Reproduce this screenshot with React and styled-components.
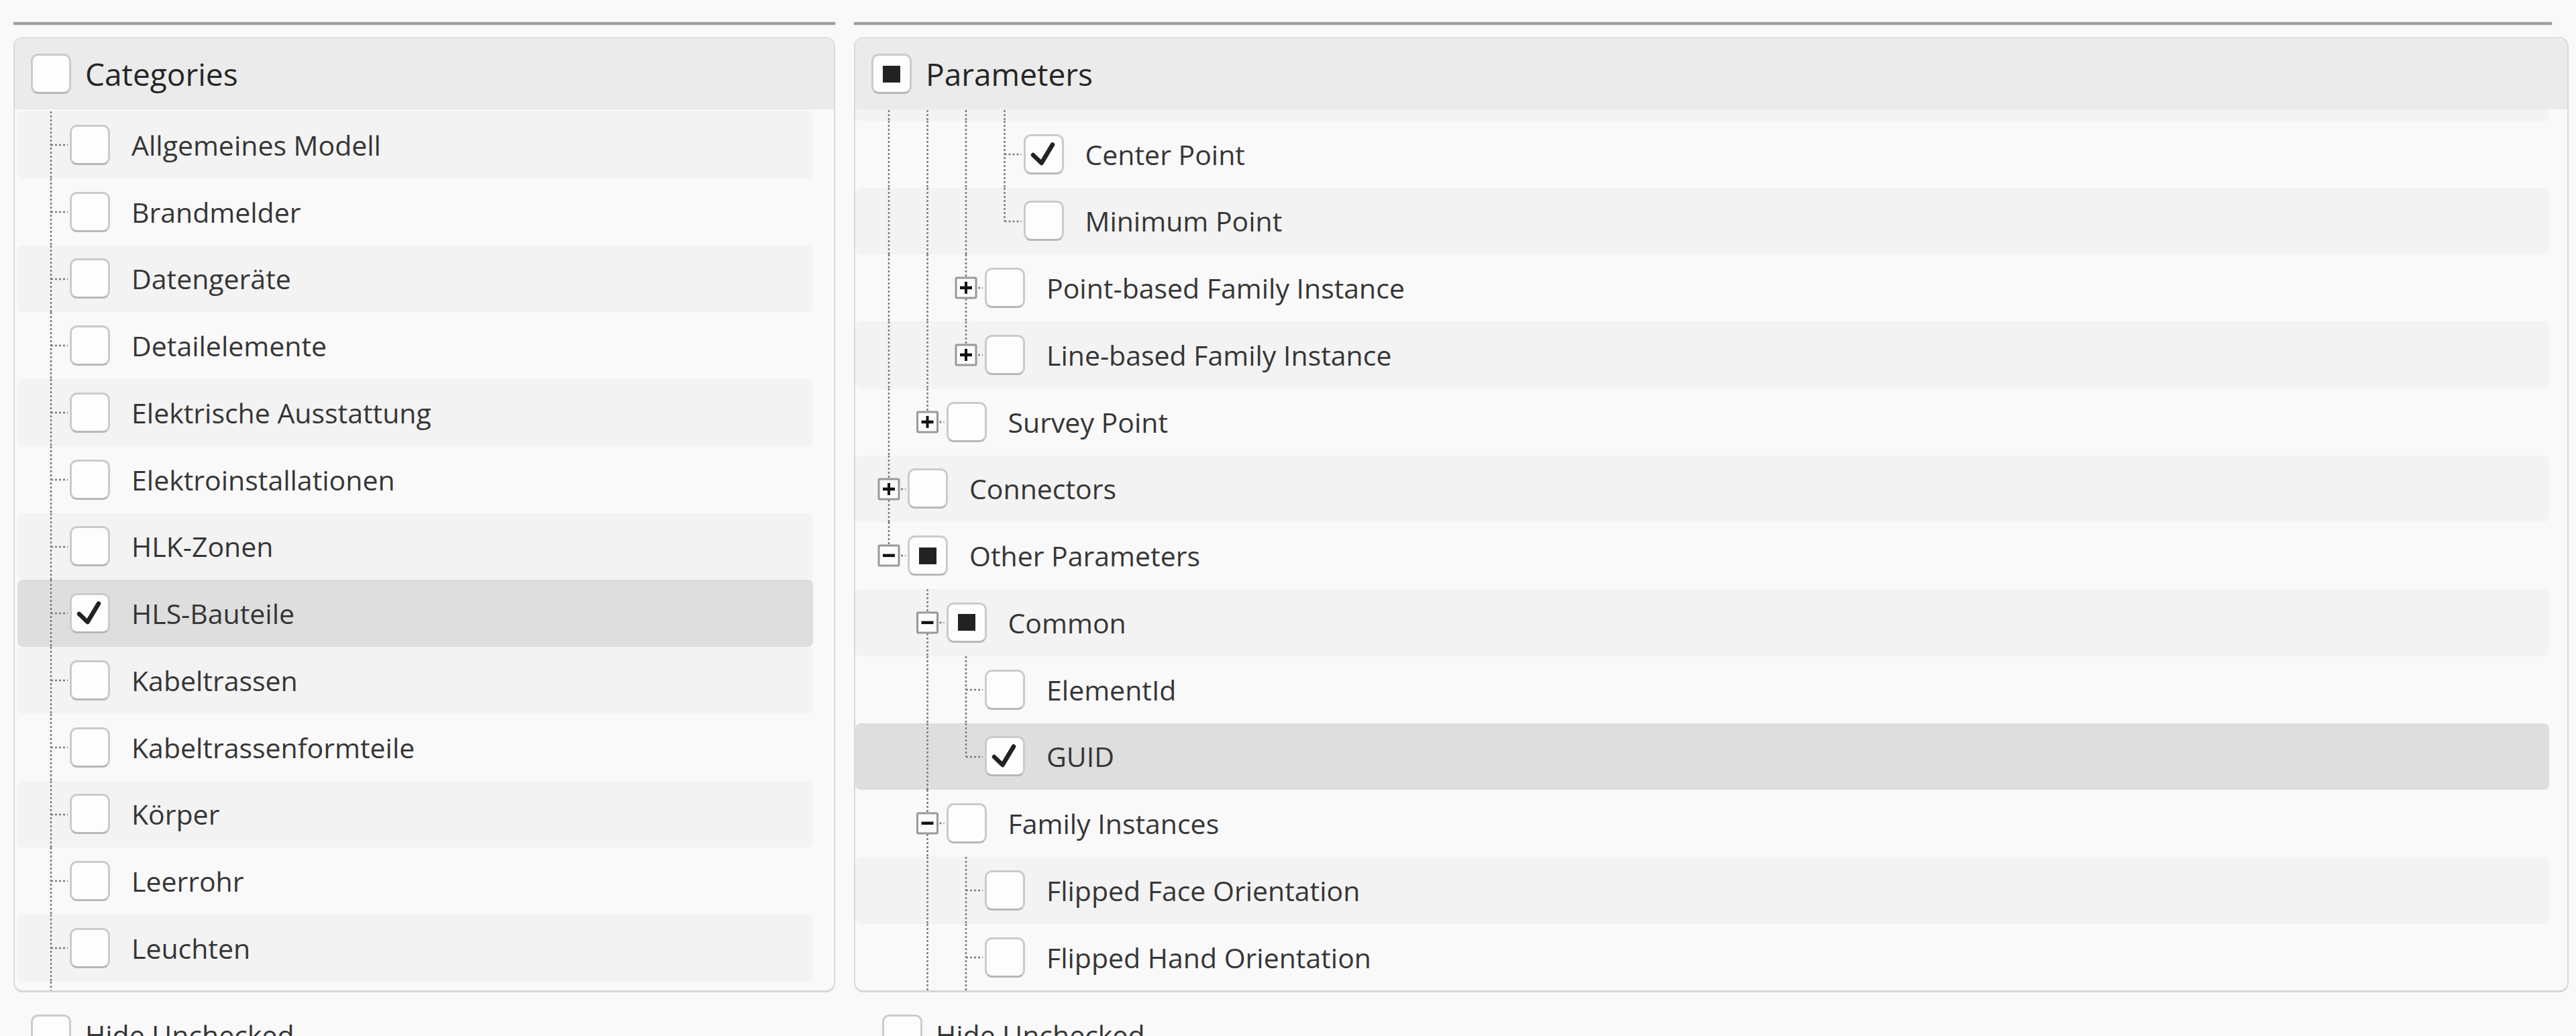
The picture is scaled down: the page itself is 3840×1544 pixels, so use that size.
import React from "react";
import styled, { createGlobalStyle } from "styled-components";

const ROW_H = 99.75;
const INDENT = 57.5;

const GlobalStyle = createGlobalStyle`
  html, body {
    margin: 0;
    padding: 0;
    background: #f9f9f9;
  }
  body {
    font-family: "Open Sans", "Noto Sans", sans-serif;
    color: #333333;
  }
`;

const SPage = styled.div`
  width: 3840px;
  height: 1544px;
  box-sizing: border-box;
  overflow: hidden;
  padding: 33px 11px 0 20px;
  display: grid;
  grid-template-columns: 1225px 1fr;
  column-gap: 28px;
`;

const SColumn = styled.div`
  display: flex;
  flex-direction: column;
  min-width: 0;
`;

const SSplitLine = styled.div`
  height: 4px;
  flex: none;
  background: #9d9d9d;
  box-shadow: 0 0 2px rgba(0, 0, 0, 0.25);
  margin-right: ${(p) => p.$trim || 0}px;
`;

const SPanel = styled.div`
  margin-top: 18px;
  height: 1424px;
  flex: none;
  box-sizing: border-box;
  border: 2px solid #dadada;
  border-top-color: #e0e0e0;
  border-bottom: 3px solid #d6d6d6;
  border-radius: 14px;
  background: #f9f9f9;
  overflow: hidden;
  display: flex;
  flex-direction: column;
`;

const SHeader = styled.div`
  height: 106px;
  flex: none;
  background: #ebebeb;
  display: flex;
  align-items: center;
  padding-left: 24px;
  gap: 21px;
  font-size: 46px;
  color: #262626;
`;

const SBody = styled.div`
  flex: 1;
  overflow: hidden;
  padding: 3px ${(p) => p.$right}px 0 ${(p) => p.$left}px;
`;

const SList = styled.div`
  display: flex;
  flex-direction: column;
  margin-top: ${(p) => p.$offset || 0}px;
`;

const SRow = styled.div`
  height: ${ROW_H}px;
  flex: none;
  display: flex;
  align-items: center;
  border-radius: 8px;
  background: ${(p) =>
    p.$selected ? "#dedede" : p.$alt ? "#f3f3f3" : "transparent"};
  font-size: 41px;
  color: #363636;
  white-space: nowrap;
`;

const SLabel = styled.span`
  margin-left: 32px;
`;

const SBox = styled.span`
  width: 60px;
  height: 60px;
  flex: none;
  box-sizing: border-box;
  border: 3px solid #cbcbcb;
  border-bottom-color: #b8b8b8;
  border-radius: 11px;
  background: #fdfdfd;
  display: flex;
  align-items: center;
  justify-content: center;
`;

const SMixed = styled.span`
  width: 26px;
  height: 25px;
  background: #222222;
`;

const SFooter = styled.div`
  margin-top: 33px;
  display: flex;
  align-items: center;
  gap: ${(p) => p.$gap}px;
  padding-left: ${(p) => p.$left}px;
  font-size: 41px;
  color: #363636;
`;

function CheckBox({ state }) {
  return (
    <SBox>
      {state === "checked" && (
        <svg width="54" height="54" viewBox="3 3 54 54">
          <path
            d="M14 31 L26.5 43 L43 15.5"
            fill="none"
            stroke="#222"
            strokeWidth="6.5"
            strokeLinecap="round"
            strokeLinejoin="round"
          />
        </svg>
      )}
      {state === "mixed" && <SMixed />}
    </SBox>
  );
}

function Guides({ level, guides = [], last, expander }) {
  const w = 78 + INDENT * level;
  const mid = ROW_H / 2;
  const x0 = 50 + INDENT * level;
  const line = { stroke: "#7c7c7c", strokeWidth: 2.5, strokeDasharray: "3 3" };
  return (
    <svg width={w} height={ROW_H} style={{ flex: "none" }}>
      {guides.map((on, k) =>
        on ? (
          <line key={k} x1={50 + INDENT * k} y1="0" x2={50 + INDENT * k} y2={ROW_H} {...line} />
        ) : null
      )}
      <line x1={x0} y1="0" x2={x0} y2={last ? mid : ROW_H} {...line} />
      <line x1={x0} y1={mid} x2={w - 3} y2={mid} {...line} />
      {expander && (
        <g>
          <rect
            x={x0 - 15}
            y={mid - 15}
            width="30"
            height="30"
            rx="1.5"
            fill="#fcfcfc"
            stroke="#999"
            strokeWidth="3"
          />
          <line x1={x0 - 9} y1={mid} x2={x0 + 9} y2={mid} stroke="#111" strokeWidth="4.5" />
          {expander === "+" && (
            <line x1={x0} y1={mid - 9} x2={x0} y2={mid + 9} stroke="#111" strokeWidth="4" />
          )}
        </g>
      )}
    </svg>
  );
}

const categories = [
  "Allgemeines Modell",
  "Brandmelder",
  "Datengeräte",
  "Detailelemente",
  "Elektrische Ausstattung",
  "Elektroinstallationen",
  "HLK-Zonen",
  "HLS-Bauteile",
  "Kabeltrassen",
  "Kabeltrassenformteile",
  "Körper",
  "Leerrohr",
  "Leuchten",
  "Luftauslässe",
  "Luftkanäle",
].map((label) => ({
  label,
  level: 0,
  state: label === "HLS-Bauteile" ? "checked" : "none",
  selected: label === "HLS-Bauteile",
}));

const parameters = [
  { label: "Maximum Point", level: 3, guides: [true, true, true] },
  { label: "Center Point", level: 3, guides: [true, true, true], state: "checked" },
  { label: "Minimum Point", level: 3, guides: [true, true, true], last: true },
  { label: "Point-based Family Instance", level: 2, guides: [true, true], expander: "+" },
  { label: "Line-based Family Instance", level: 2, guides: [true, true], expander: "+", last: true },
  { label: "Survey Point", level: 1, guides: [true], expander: "+", last: true },
  { label: "Connectors", level: 0, expander: "+" },
  { label: "Other Parameters", level: 0, expander: "-", state: "mixed", last: true },
  { label: "Common", level: 1, guides: [false], expander: "-", state: "mixed" },
  { label: "ElementId", level: 2, guides: [false, true] },
  { label: "GUID", level: 2, guides: [false, true], state: "checked", last: true, selected: true },
  { label: "Family Instances", level: 1, guides: [false], expander: "-" },
  { label: "Flipped Face Orientation", level: 2, guides: [false, true] },
  { label: "Flipped Hand Orientation", level: 2, guides: [false, true] },
  { label: "Mirrored", level: 2, guides: [false, true] },
];

function TreePanel({ title, titleState, rows, left, right, offset }) {
  return (
    <SPanel>
      <SHeader>
        <CheckBox state={titleState} />
        <span>{title}</span>
      </SHeader>
      <SBody $left={left} $right={right}>
        <SList $offset={offset}>
          {rows.map((r, i) => (
            <SRow key={r.label} $alt={i % 2 === 0} $selected={r.selected}>
              <Guides level={r.level} guides={r.guides} last={r.last} expander={r.expander} />
              <CheckBox state={r.state} />
              <SLabel>{r.label}</SLabel>
            </SRow>
          ))}
        </SList>
      </SBody>
    </SPanel>
  );
}

export default function App() {
  return (
    <>
      <GlobalStyle />
      <SPage>
        <SColumn>
          <SSplitLine />
          <TreePanel title="Categories" titleState="none" rows={categories} left={4} right={31} />
          <SFooter $left={26} $gap={21}>
            <CheckBox state="none" />
            <span>Hide Unchecked</span>
          </SFooter>
        </SColumn>
        <SColumn>
          <SSplitLine $trim={25} />
          <TreePanel
            title="Parameters"
            titleState="mixed"
            rows={parameters}
            left={0}
            right={27}
            offset={-86}
          />
          <SFooter $left={42} $gap={20}>
            <CheckBox state="none" />
            <span>Hide Unchecked</span>
          </SFooter>
        </SColumn>
      </SPage>
    </>
  );
}
